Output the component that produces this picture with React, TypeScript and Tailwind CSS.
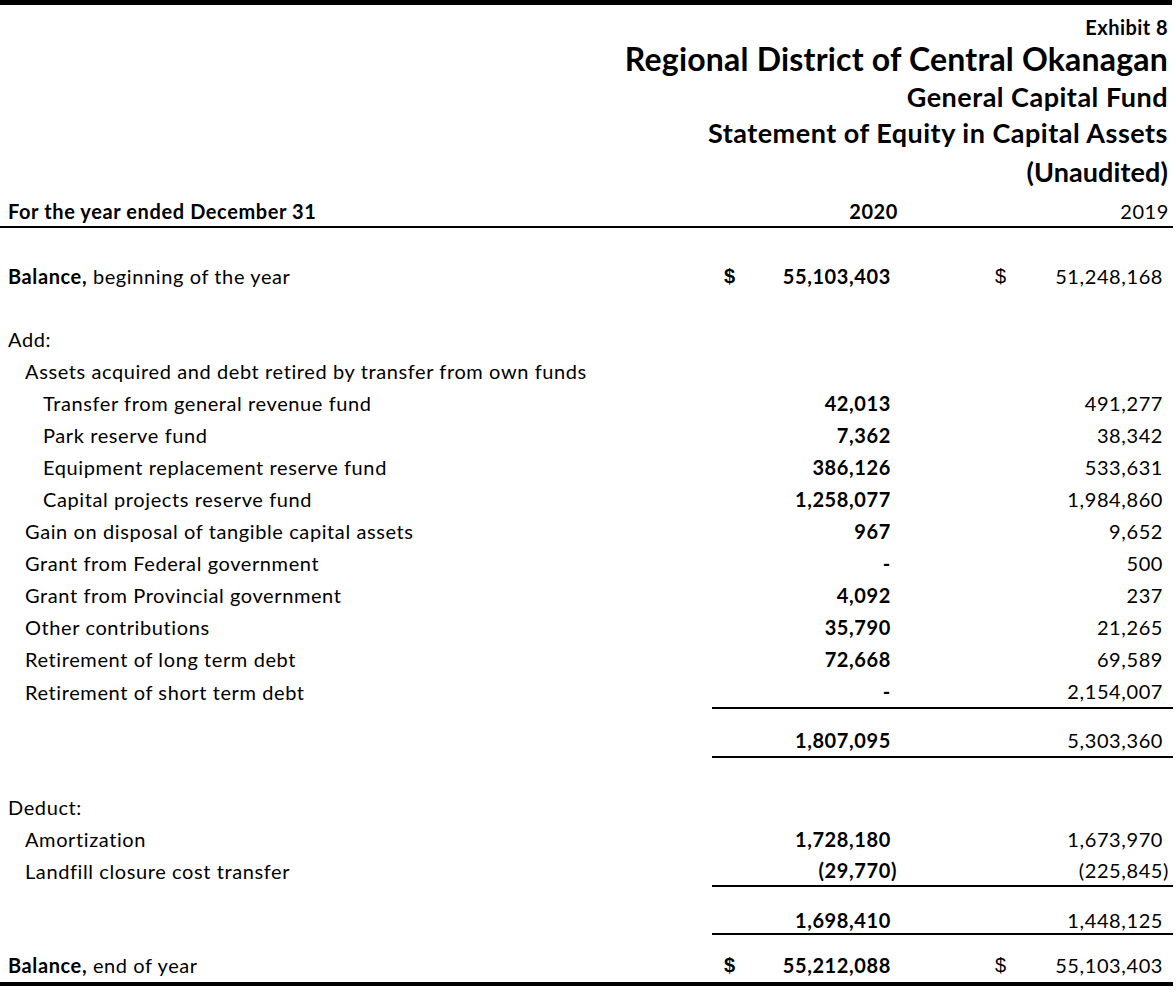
import React from "react";

type Row = {
  label: React.ReactNode;
  indent?: number;
  a?: string;
  b?: string;
  dollar?: boolean;
  line?: boolean;
  h?: string;
  mt?: string;
};

const Num = ({ v, bold }: { v?: string; bold?: boolean }) => {
  if (v === undefined) return <span />;
  const neg = v.startsWith("(");
  return (
    <span className={bold ? "font-bold" : ""}>
      {v}
      {!neg && <span className="invisible">)</span>}
    </span>
  );
};

const Dollar = ({ show, bold }: { show?: boolean; bold?: boolean }) => (
  <span
    className={`${bold ? "font-bold" : ""} tracking-normal text-[20px]`}
    style={{ fontFamily: "'Liberation Sans', Arial, sans-serif" }}
  >
    {show ? "$" : ""}
  </span>
);

function DataRow({ r }: { r: Row }) {
  const indentCls = r.indent === 2 ? "pl-[43px]" : r.indent === 1 ? "pl-[25px]" : "pl-[8px]";
  const border = r.line ? "border-b-2 border-black" : "";
  return (
    <div className={`flex items-center ${r.h ?? "h-[32px]"} ${r.mt ?? ""}`}>
      <div className={`w-[712px] shrink-0 ${indentCls}`}>{r.label}</div>
      <div className={`w-[190px] h-full shrink-0 flex items-center justify-between pl-[12px] pr-[5px] ${border}`}>
        <Dollar show={r.dollar} bold />
        <Num v={r.a} bold />
      </div>
      <div className={`w-[271px] h-full shrink-0 flex items-center justify-between pl-[93px] pr-[4px] ${border}`}>
        <Dollar show={r.dollar} />
        <Num v={r.b} />
      </div>
    </div>
  );
}

export default function App() {
  const font = { fontFamily: "Lato, 'Liberation Sans', sans-serif" };
  const add: Row[] = [
    { label: "Add:", indent: 0, mt: "mt-[31px]" },
    { label: "Assets acquired and debt retired by transfer from own funds", indent: 1 },
    { label: "Transfer from general revenue fund", indent: 2, a: "42,013", b: "491,277" },
    { label: "Park reserve fund", indent: 2, a: "7,362", b: "38,342" },
    { label: "Equipment replacement reserve fund", indent: 2, a: "386,126", b: "533,631" },
    { label: "Capital projects reserve fund", indent: 2, a: "1,258,077", b: "1,984,860" },
    { label: "Gain on disposal of tangible capital assets", indent: 1, a: "967", b: "9,652" },
    { label: "Grant from Federal government", indent: 1, a: "-", b: "500" },
    { label: "Grant from Provincial government", indent: 1, a: "4,092", b: "237" },
    { label: "Other contributions", indent: 1, a: "35,790", b: "21,265" },
    { label: "Retirement of long term debt", indent: 1, a: "72,668", b: "69,589" },
    { label: "Retirement of short term debt", indent: 1, a: "-", b: "2,154,007", line: true, h: "h-[34px]" },
  ];
  return (
    <div
      className="w-[1176px] h-[992px] bg-white text-black overflow-hidden text-[20px] tracking-[0.6px] leading-none"
      style={font}
    >
      <div className="h-[5px] w-[1172px] bg-black" />
      <div className="flex flex-col items-end pr-[8px] font-bold">
        <div className="text-[20px] tracking-[0.45px] h-[22px] mt-[11px] flex items-center">Exhibit 8</div>
        <div className="text-[32px] tracking-[0.2px] h-[36px] mt-[3px] flex items-center">
          Regional District of Central Okanagan
        </div>
        <div className="text-[27px] tracking-[0.5px] h-[30px] mt-[4px] flex items-center">General Capital Fund</div>
        <div className="text-[27px] tracking-[0.5px] h-[30px] mt-[6px] flex items-center">
          Statement of Equity in Capital Assets
        </div>
        <div className="text-[27px] tracking-[0.1px] h-[30px] mt-[9px] flex items-center">(Unaudited)</div>
      </div>
      <div className="flex items-center h-[32px] mt-[10px] w-[1173px] border-b-2 border-black">
        <div className="w-[712px] shrink-0 pl-[8px] font-bold">For the year ended December 31</div>
        <div className="w-[190px] shrink-0 text-right pr-[4px] font-bold">2020</div>
        <div className="w-[271px] shrink-0 text-right pr-[4px]">2019</div>
      </div>

      <DataRow
        r={{
          label: (
            <>
              <span className="font-bold">Balance,</span> beginning of the year
            </>
          ),
          a: "55,103,403",
          b: "51,248,168",
          dollar: true,
          mt: "mt-[32px]",
        }}
      />
      {add.map((r, i) => (
        <DataRow key={i} r={r} />
      ))}
      <DataRow r={{ label: "", a: "1,807,095", b: "5,303,360", line: true, h: "h-[34px]", mt: "mt-[15px]" }} />
      <DataRow r={{ label: "Deduct:", indent: 0, mt: "mt-[33px]" }} />
      <DataRow r={{ label: "Amortization", indent: 1, a: "1,728,180", b: "1,673,970" }} />
      <DataRow
        r={{ label: "Landfill closure cost transfer", indent: 1, a: "(29,770)", b: "(225,845)", line: true }}
      />
      <DataRow r={{ label: "", a: "1,698,410", b: "1,448,125", line: true, h: "h-[28px]", mt: "mt-[20px]" }} />
      <div className="mt-[13px] w-[1173px] border-b-4 border-black">
        <DataRow
          r={{
            label: (
              <>
                <span className="font-bold">Balance,</span> end of year
              </>
            ),
            a: "55,212,088",
            b: "55,103,403",
            dollar: true,
            h: "h-[34px]",
          }}
        />
      </div>
    </div>
  );
}
